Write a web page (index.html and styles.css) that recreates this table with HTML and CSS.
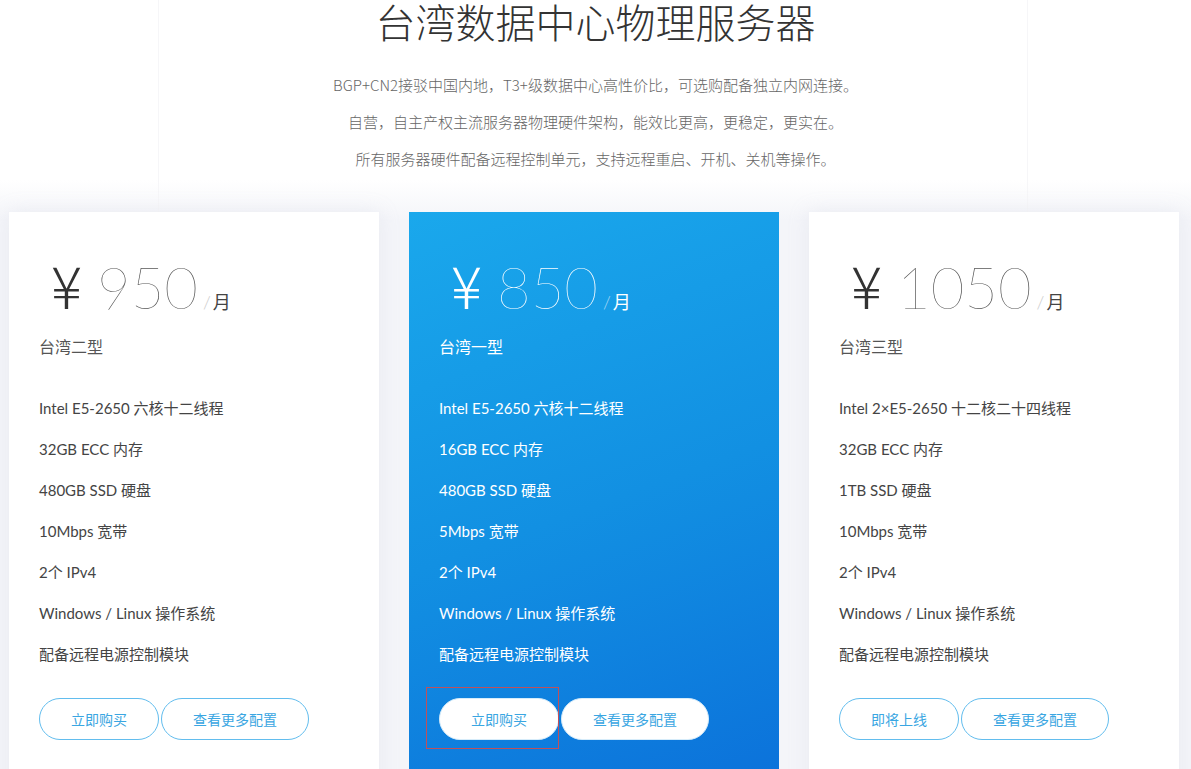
FILE: index.html
```html
<!DOCTYPE html>
<html lang="zh-CN">
<head>
    <meta charset="UTF-8">
    <meta name="viewport" content="width=device-width, initial-scale=1.0">
    <title>台湾数据中心物理服务器</title>
    <link rel="stylesheet" href="styles.css">
</head>
<body>
    <div class="intro">
        <h1>台湾数据中心物理服务器</h1>
        <p>BGP+CN2接驳中国内地，T3+级数据中心高性价比，可选购配备独立内网连接。</p>
        <p>自营，自主产权主流服务器物理硬件架构，能效比更高，更稳定，更实在。</p>
        <p>所有服务器硬件配备远程控制单元，支持远程重启、开机、关机等操作。</p>
    </div>

    <div class="plans">
        <div class="plan">
            <div class="price"><span class="yen">¥</span><span class="amount">950</span><span class="unit"><i>/</i>月</span></div>
            <div class="plan-name">台湾二型</div>
            <ul class="specs">
                <li>Intel E5-2650 六核十二线程</li>
                <li>32GB ECC 内存</li>
                <li>480GB SSD 硬盘</li>
                <li>10Mbps 宽带</li>
                <li>2个 IPv4</li>
                <li>Windows / Linux 操作系统</li>
                <li>配备远程电源控制模块</li>
            </ul>
            <div class="actions">
                <a class="btn btn-buy">立即购买</a>
                <a class="btn btn-more">查看更多配置</a>
            </div>
        </div>

        <div class="plan plan-featured">
            <div class="price"><span class="yen">¥</span><span class="amount">850</span><span class="unit"><i>/</i>月</span></div>
            <div class="plan-name">台湾一型</div>
            <ul class="specs">
                <li>Intel E5-2650 六核十二线程</li>
                <li>16GB ECC 内存</li>
                <li>480GB SSD 硬盘</li>
                <li>5Mbps 宽带</li>
                <li>2个 IPv4</li>
                <li>Windows / Linux 操作系统</li>
                <li>配备远程电源控制模块</li>
            </ul>
            <div class="actions">
                <a class="btn btn-buy is-focused">立即购买</a>
                <a class="btn btn-more">查看更多配置</a>
            </div>
        </div>

        <div class="plan">
            <div class="price"><span class="yen">¥</span><span class="amount">1050</span><span class="unit"><i>/</i>月</span></div>
            <div class="plan-name">台湾三型</div>
            <ul class="specs">
                <li>Intel 2×E5-2650 十二核二十四线程</li>
                <li>32GB ECC 内存</li>
                <li>1TB SSD 硬盘</li>
                <li>10Mbps 宽带</li>
                <li>2个 IPv4</li>
                <li>Windows / Linux 操作系统</li>
                <li>配备远程电源控制模块</li>
            </ul>
            <div class="actions">
                <a class="btn btn-buy">即将上线</a>
                <a class="btn btn-more">查看更多配置</a>
            </div>
        </div>
    </div>
</body>
</html>
```

FILE: styles.css
```css
:root {
    --text-dark: #333333;
    --text-body: #444444;
    --text-muted: #666666;
    --blue: #3aa6e2;
    --blue-border: #62bdee;
}

body {
    margin: 0;
    font-family: Lato, "Noto Sans CJK SC", sans-serif;
    color: var(--text-body);
    background: linear-gradient(180deg, #ffffff 0, #ffffff 180px, #f4f5f9 220px, #f4f5f9 100%);
    min-height: 100vh;
    overflow: hidden;
}

.intro {
    text-align: center;
    padding-bottom: 35px;
    background:
        linear-gradient(#f6f6f8, #f6f6f8) 158px 0 / 1px 100% no-repeat,
        linear-gradient(#f6f6f8, #f6f6f8) 1027px 0 / 1px 100% no-repeat;
}

.intro h1 {
    margin: 0 0 24px;
    font-family: "Noto Sans CJK SC", sans-serif;
    font-size: 40px;
    line-height: 42px;
    font-weight: 300;
    color: var(--text-dark);
}

.intro p {
    margin: 0;
    font-family: "Noto Sans CJK SC", sans-serif;
    font-size: 15px;
    line-height: 37px;
    font-weight: 300;
    color: var(--text-muted);
}

.plans {
    display: flex;
    gap: 30px;
    padding-left: 9px;
}

.plan {
    width: 370px;
    flex: none;
    box-sizing: border-box;
    padding: 39px 30px 60px;
    background: #ffffff;
    box-shadow: 0 0 18px rgba(200, 205, 220, 0.25);
}

.price {
    display: flex;
    align-items: baseline;
    padding-left: 12px;
    height: 66px;
    line-height: 66px;
}

.yen {
    font-family: "Noto Sans CJK SC", sans-serif;
    font-size: 58px;
    font-weight: 300;
    color: var(--text-dark);
    margin-right: 15px;
}

.amount {
    font-size: 58px;
    font-weight: 100;
    color: #555555;
}

.unit {
    font-family: "Noto Sans CJK SC", sans-serif;
    font-size: 18px;
    color: #444444;
    margin-left: 5px;
}

.unit i {
    font-style: normal;
    font-family: Lato, sans-serif;
    font-weight: 300;
    color: #cccccc;
    margin-right: 2px;
}

.plan-name {
    margin-top: 17px;
    font-family: "Noto Sans CJK SC", sans-serif;
    font-size: 16px;
    line-height: 24px;
    color: #555555;
}

.specs {
    list-style: none;
    margin: 40px 0 0;
    padding: 0;
}

.specs li {
    font-size: 15px;
    line-height: 20px;
    margin-bottom: 21px;
    color: var(--text-body);
}

.actions {
    display: flex;
    gap: 2px;
    margin-top: 34px;
}

.btn {
    display: flex;
    align-items: center;
    justify-content: center;
    height: 42px;
    box-sizing: border-box;
    border: 1px solid var(--blue-border);
    border-radius: 21px;
    font-family: "Noto Sans CJK SC", sans-serif;
    font-size: 14px;
    color: var(--blue);
    cursor: pointer;
    position: relative;
}

.btn-buy {
    width: 120px;
}

.btn-more {
    width: 148px;
}

.plan-featured {
    background: linear-gradient(160deg, #1aa8ec 0%, #1290e2 50%, #0b70da 100%);
    box-shadow: none;
}

.plan-featured .yen,
.plan-featured .amount,
.plan-featured .unit,
.plan-featured .plan-name,
.plan-featured .specs li {
    color: #ffffff;
}

.plan-featured .unit i {
    color: rgba(255, 255, 255, 0.6);
}

.plan-featured .btn {
    background: #ffffff;
    border-color: #d6ecfa;
    color: #3aa6e2;
}

.is-focused::after {
    content: '';
    position: absolute;
    left: -14px;
    top: -12px;
    right: -1px;
    bottom: -10px;
    border: 1px solid #c0505a;
}
```
